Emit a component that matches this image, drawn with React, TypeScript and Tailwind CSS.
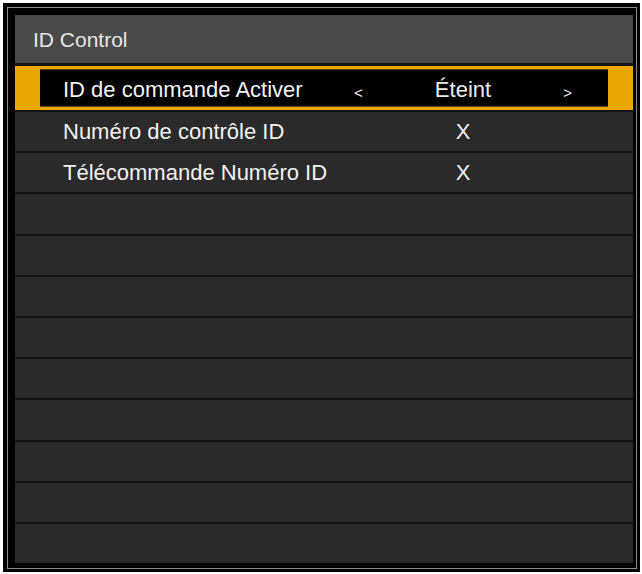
import React from "react";

const font = { fontFamily: '"Liberation Sans", Arial, sans-serif' };

function NormalRow({ label, value }: { label?: string; value?: string }) {
  return (
    <div className="flex-1 flex items-center bg-[#2a2a2a] border-t-2 border-[#131313]">
      <div className="w-[335px] pl-[48px] pt-[1px] text-[22px] text-[#f1f1f1] whitespace-nowrap leading-none">
        {label}
      </div>
      <div className="w-[226px] pt-[1px] flex justify-center text-[22px] text-[#f1f1f1] leading-none">
        {value}
      </div>
    </div>
  );
}

export default function App() {
  const empty = Array.from({ length: 9 });
  return (
    <div className="w-[642px] h-[574px] bg-white pt-[3px] pl-[3px]" style={font}>
      <div className="w-[637px] h-[569px] bg-black p-[4px] pr-[3px] pb-[3px]">
        <div className="w-full h-full border border-[#8c8c8c] bg-black pl-[7px] pt-[7px] pr-[3px] pb-[5px]">
          <div className="w-full h-full flex flex-col">
            <div className="h-[48px] shrink-0 bg-[#494949] flex items-center pl-[18px] text-[21px] text-[#e6e6e6] leading-none">
              ID Control
            </div>
            <div className="h-[3px] shrink-0 bg-[#161616]" />
            <div className="flex-1 flex flex-col">
              <div className="h-[44px] shrink-0 bg-[#eba600] flex py-[3px]">
                <div className="w-[25px] shrink-0" />
                <div className="flex-1 bg-black flex items-center border-t border-b border-[#5a4300]">
                  <div className="w-[310px] pl-[23px] pt-[4px] text-[22px] text-[#f4f4f4] whitespace-nowrap leading-none">
                    ID de commande Activer
                  </div>
                  <div className="w-[226px] pt-[4px] flex items-center justify-between text-[#f0f0f0] leading-none">
                    <span className="text-[15px] pl-[4px] pt-[5px]">&lt;</span>
                    <span className="text-[22px] text-[#ececec]">Éteint</span>
                    <span className="text-[15px] pr-[4px] pt-[5px]">&gt;</span>
                  </div>
                </div>
                <div className="w-[25px] shrink-0" />
              </div>
              <NormalRow label="Numéro de contrôle ID" value="X" />
              <NormalRow label="Télécommande Numéro ID" value="X" />
              {empty.map((_, i) => (
                <NormalRow key={i} />
              ))}
            </div>
          </div>
        </div>
      </div>
    </div>
  );
}
